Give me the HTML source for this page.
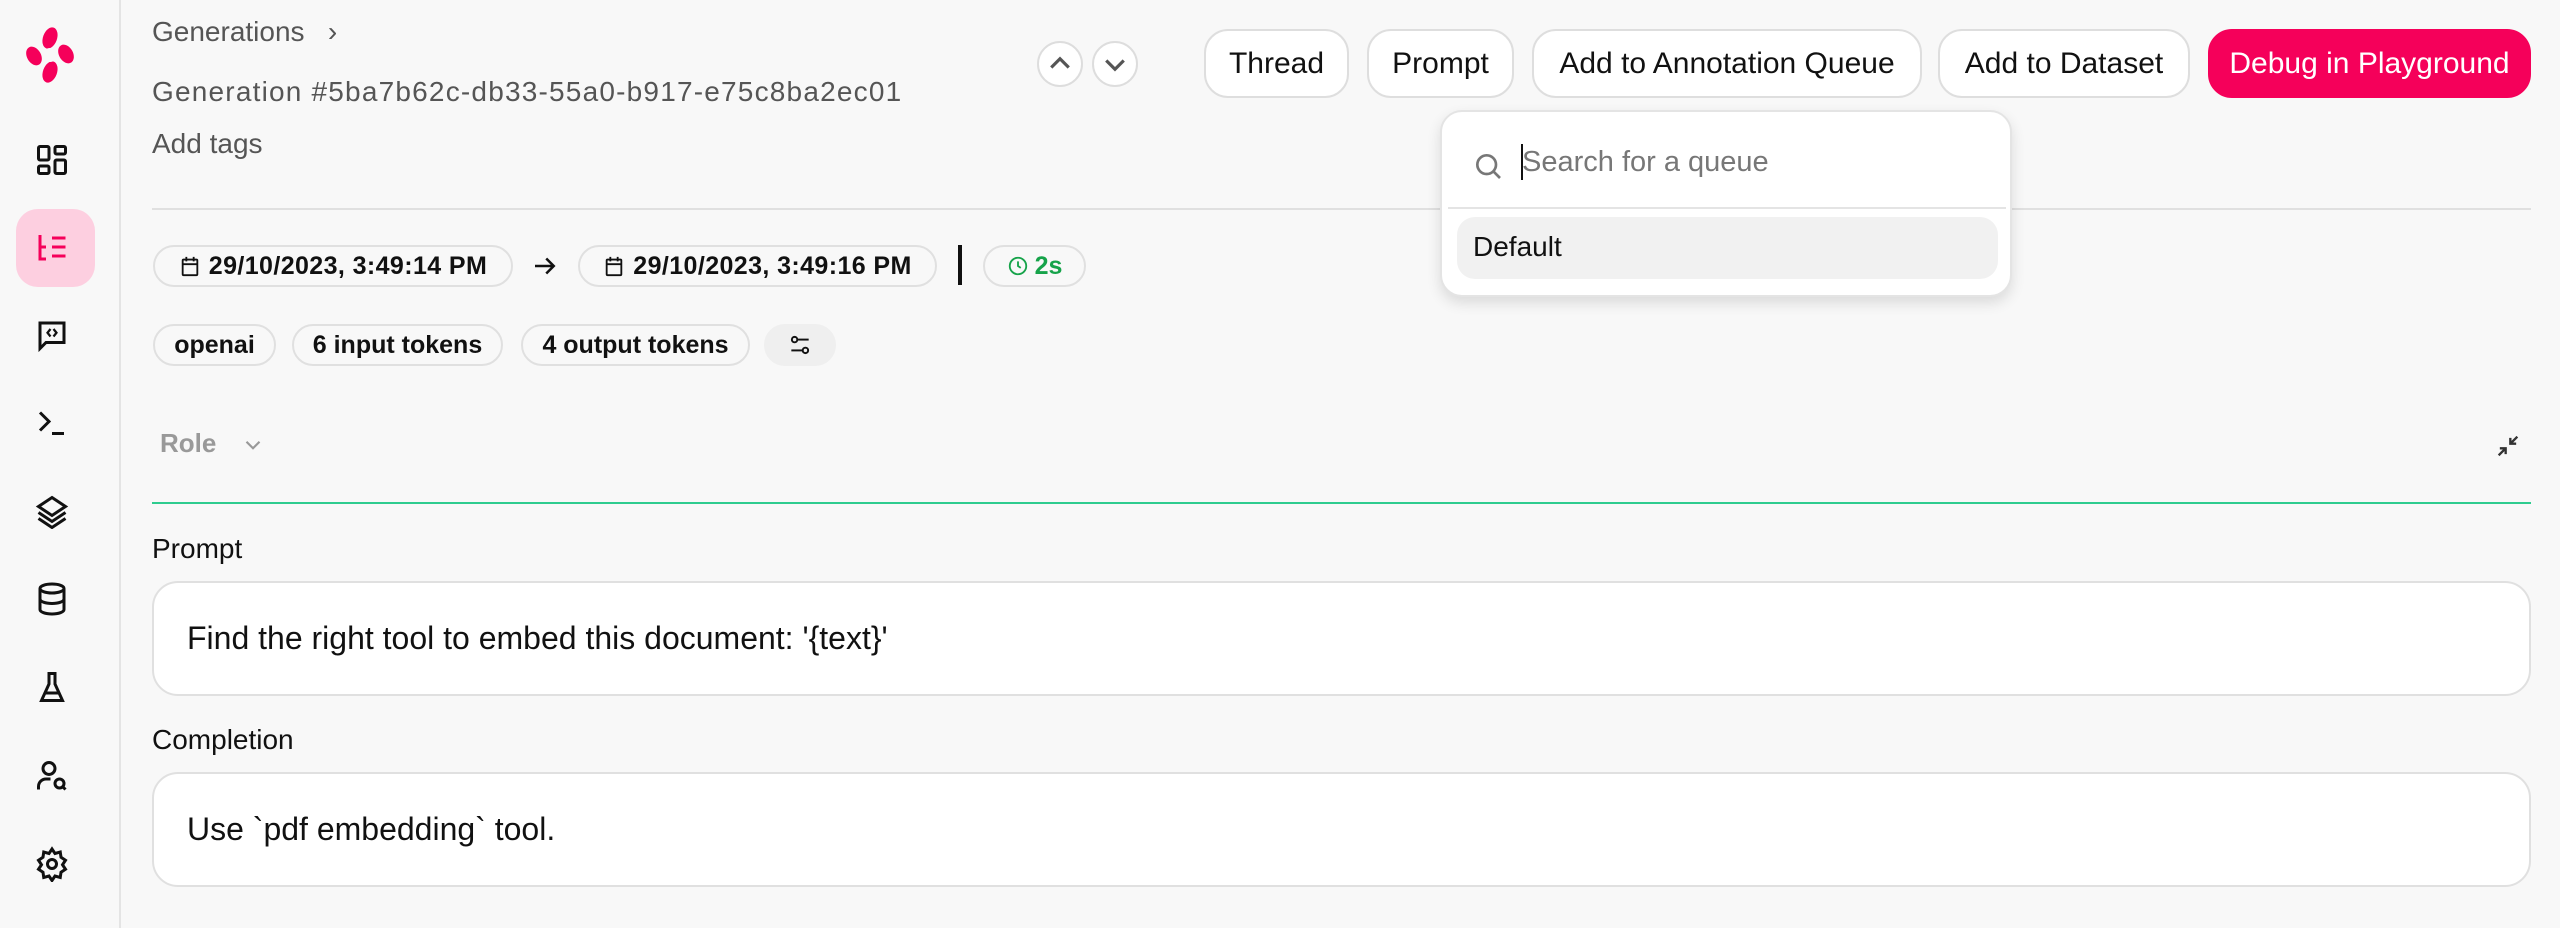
<!DOCTYPE html>
<html><head><meta charset="utf-8"><style>
*{box-sizing:border-box;margin:0;padding:0}
body{width:2560px;height:928px;background:#f8f8f8;font-family:"Liberation Sans",sans-serif;position:relative;overflow:hidden;color:#111}
.a{position:absolute}
.side{left:0;top:0;width:121px;height:928px;border-right:2px solid #e4e4e4;background:#f8f8f8}
.ic{position:absolute;left:34px;width:36px;height:36px}
.t{position:absolute;white-space:nowrap}
.btn{position:absolute;top:29px;height:69px;border:2px solid #dedede;border-radius:24px;background:#fff;font-size:30px;display:flex;align-items:center;justify-content:center;color:#111}
.chip{position:absolute;height:42px;border:2px solid #e0e0e0;border-radius:21px;background:#f8f8f8;font-size:25px;font-weight:bold;display:flex;align-items:center;justify-content:center}
.box{position:absolute;left:152px;width:2379px;height:115px;border:2px solid #e0e0e0;border-radius:26px;background:#fff;font-size:32px;padding-left:33px;display:flex;align-items:center}
.circ{position:absolute;top:41px;width:46px;height:46px;border:2px solid #ddd;border-radius:50%;background:#fff}
</style></head><body>
<div class="a side">
<svg class="a" style="left:22px;top:26px" width="56" height="58" viewBox="0 0 56 58"><g fill="#f5005a"><ellipse cx="28" cy="12" rx="7" ry="11" transform="rotate(20 28 12)"/><ellipse cx="28" cy="46" rx="7" ry="11" transform="rotate(20 28 46)"/><ellipse cx="12" cy="30" rx="7" ry="10" transform="rotate(-30 12 30)"/><ellipse cx="44" cy="28" rx="7" ry="10" transform="rotate(-30 44 28)"/></g><circle cx="28" cy="29" r="7" fill="#f8f8f8"/></svg>
<svg class="ic" style="top:142px" viewBox="0 0 24 24" fill="none" stroke="#111" stroke-width="2"><rect x="3" y="3" width="7" height="9" rx="1"/><rect x="14" y="3" width="7" height="5" rx="1"/><rect x="14" y="12" width="7" height="9" rx="1"/><rect x="3" y="16" width="7" height="5" rx="1"/></svg>
<div class="a" style="left:16px;top:209px;width:79px;height:78px;border-radius:22px;background:#fdcfe0"></div>
<svg class="ic" style="top:229px" viewBox="0 0 24 24" fill="none" stroke="#f5005a" stroke-width="2"><path d="M4 4v16h4M4 12h4M12 6h9M12 12h9M12 18h9"/></svg>
<svg class="ic" style="top:317px" viewBox="0 0 24 24" fill="none" stroke="#111" stroke-width="2"><path d="M4 4h16v13H8l-4 4z"/><path d="M11 8l-2 2.5 2 2.5M13 8l2 2.5-2 2.5" stroke-width="1.5"/></svg>
<svg class="ic" style="top:405px" viewBox="0 0 24 24" fill="none" stroke="#111" stroke-width="2"><path d="M4 5l6 6-6 6M12 19h8"/></svg>
<svg class="ic" style="top:493px" viewBox="0 0 24 24" fill="none" stroke="#111" stroke-width="2"><path d="M12 3l9 6-9 6-9-6z M3 13l9 6 9-6 M3 17l9 6 9-6"/></svg>
<svg class="ic" style="top:581px" viewBox="0 0 24 24" fill="none" stroke="#111" stroke-width="2"><ellipse cx="12" cy="5" rx="8" ry="3"/><path d="M4 5v14c0 1.7 3.6 3 8 3s8-1.3 8-3V5M4 12c0 1.7 3.6 3 8 3s8-1.3 8-3"/></svg>
<svg class="ic" style="top:669px" viewBox="0 0 24 24" fill="none" stroke="#111" stroke-width="2"><path d="M9 3h6M10 3v7l-5 11h14l-5-11V3M7 16h10"/></svg>
<svg class="ic" style="top:758px" viewBox="0 0 24 24" fill="none" stroke="#111" stroke-width="2"><circle cx="10" cy="7" r="4"/><path d="M3 21v-2a5 5 0 0 1 5-5h3"/><circle cx="17" cy="17" r="3"/><path d="M19 19l2 2"/></svg>
<svg class="ic" style="top:846px" viewBox="0 0 24 24" fill="none" stroke="#111" stroke-width="2"><circle cx="12" cy="12" r="3"/><path d="M12 2l2 3 3.5-1 .5 3.5 3 2-2 3 2 3-3 2-.5 3.5-3.5-1-2 3-2-3-3.5 1-.5-3.5-3-2 2-3-2-3 3-2 .5-3.5 3.5 1z"/></svg>
</div>

<div class="t" style="left:152px;top:16px;font-size:28px;color:#555">Generations &nbsp;&nbsp;›</div>
<div class="t" style="left:152px;top:76px;font-size:28px;color:#555;letter-spacing:1.2px">Generation #5ba7b62c-db33-55a0-b917-e75c8ba2ec01</div>
<div class="t" style="left:152px;top:128px;font-size:28px;color:#555">Add tags</div>

<div class="circ" style="left:1037px"><svg width="42" height="42" viewBox="0 0 24 24" fill="none" stroke="#555" stroke-width="1.8"><path d="M7 14l5-5 5 5"/></svg></div>
<div class="circ" style="left:1092px"><svg width="42" height="42" viewBox="0 0 24 24" fill="none" stroke="#555" stroke-width="1.8"><path d="M7 10l5 5 5-5"/></svg></div>

<div class="btn" style="left:1204px;width:145px">Thread</div>
<div class="btn" style="left:1367px;width:147px">Prompt</div>
<div class="btn" style="left:1532px;width:390px">Add to Annotation Queue</div>
<div class="btn" style="left:1938px;width:252px">Add to Dataset</div>
<div class="btn" style="left:2208px;width:323px;background:#f5005a;border-color:#f5005a;color:#fff">Debug in Playground</div>

<div class="a" style="left:152px;top:208px;width:2379px;height:2px;background:#e0e0e0"></div>

<div class="chip" style="left:153px;top:245px;width:360px;letter-spacing:0.4px"><svg width="22" height="22" viewBox="0 0 24 24" fill="none" stroke="#111" stroke-width="2" style="margin-right:8px"><rect x="4" y="5" width="16" height="17" rx="1"/><path d="M4 10h16M8 2v5M16 2v5"/></svg>29/10/2023, 3:49:14 PM</div>
<svg class="a" style="left:530px;top:251px" width="30" height="30" viewBox="0 0 24 24" fill="none" stroke="#111" stroke-width="2"><path d="M4 12h15M13 6l6 6-6 6"/></svg>
<div class="chip" style="left:578px;top:245px;width:359px;letter-spacing:0.4px"><svg width="22" height="22" viewBox="0 0 24 24" fill="none" stroke="#111" stroke-width="2" style="margin-right:8px"><rect x="4" y="5" width="16" height="17" rx="1"/><path d="M4 10h16M8 2v5M16 2v5"/></svg>29/10/2023, 3:49:16 PM</div>
<div class="a" style="left:958px;top:245px;width:4px;height:40px;background:#111"></div>
<div class="chip" style="left:983px;top:245px;width:103px;color:#16a34a"><svg width="22" height="22" viewBox="0 0 24 24" fill="none" stroke="#16a34a" stroke-width="2" style="margin-right:6px"><circle cx="12" cy="12" r="9"/><path d="M12 7v5l3 2"/></svg>2s</div>

<div class="chip" style="left:153px;top:324px;width:123px">openai</div>
<div class="chip" style="left:292px;top:324px;width:211px">6 input tokens</div>
<div class="chip" style="left:521px;top:324px;width:229px">4 output tokens</div>
<div class="chip" style="left:764px;top:324px;width:72px;background:#efefef;border-color:#efefef"><svg width="26" height="26" viewBox="0 0 24 24" fill="none" stroke="#111" stroke-width="1.8"><circle cx="7" cy="7" r="2.5"/><path d="M10 7h10"/><circle cx="17" cy="17" r="2.5"/><path d="M4 17h10"/></svg></div>

<div class="t" style="left:160px;top:428px;font-size:26px;font-weight:bold;color:#999">Role</div>
<svg class="a" style="left:240px;top:432px" width="26" height="26" viewBox="0 0 24 24" fill="none" stroke="#999" stroke-width="2"><path d="M6 9l6 6 6-6"/></svg>
<svg class="a" style="left:2494px;top:432px" width="28" height="28" viewBox="0 0 24 24" fill="none" stroke="#333" stroke-width="2"><path d="M4 20l6-6M5 14h5v5M20 4l-6 6M14 5v5h5"/></svg>
<div class="a" style="left:152px;top:502px;width:2379px;height:2px;background:#2ecc8f"></div>

<div class="t" style="left:152px;top:533px;font-size:28px">Prompt</div>
<div class="box" style="top:581px">Find the right tool to embed this document: '{text}'</div>
<div class="t" style="left:152px;top:724px;font-size:28px">Completion</div>
<div class="box" style="top:772px">Use `pdf embedding` tool.</div>

<div class="a" style="left:1440px;top:110px;width:572px;height:187px;background:#fff;border:2px solid #e4e4e4;border-radius:22px;box-shadow:0 6px 14px rgba(0,0,0,0.12)">
<svg class="a" style="left:30px;top:38px" width="32" height="32" viewBox="0 0 24 24" fill="none" stroke="#777" stroke-width="2"><circle cx="11" cy="11" r="7"/><path d="M16 16l5 5"/></svg>
<div class="a" style="left:79px;top:32px;width:2px;height:36px;background:#111"></div>
<div class="t" style="left:80px;top:34px;font-size:29px;color:#777">Search for a queue</div>
<div class="a" style="left:6px;top:95px;width:558px;height:2px;background:#e4e4e4"></div>
<div class="a" style="left:15px;top:105px;width:541px;height:62px;background:#f1f1f1;border-radius:18px"></div>
<div class="t" style="left:31px;top:119px;font-size:28px">Default</div>
</div>
</body></html>
